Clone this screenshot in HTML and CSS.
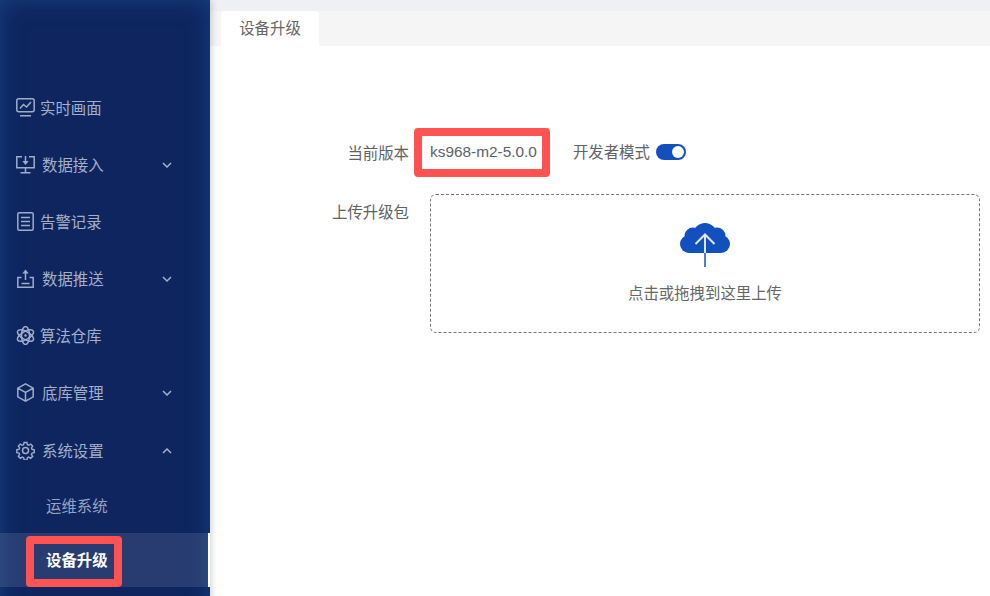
FILE: index.html
```html
<!DOCTYPE html>
<html lang="zh-CN">
<head>
<meta charset="utf-8">
<title>设备升级</title>
<link rel="stylesheet" href="styles.css">
</head>
<body>
<div class="app">
  <aside class="sidebar">
    <nav class="menu">
      <a class="item">
        <svg class="icon" viewBox="0 0 19 19"><rect x=".8" y=".8" width="17.400" height="13" rx="2"/><path d="M4 10.500l3.500-4 3 2.500L15 4M4 17.800h11"/></svg>
        <span class="label">实时画面</span>
      </a>
      <a class="item">
        <svg class="icon" viewBox="0 0 19 19"><path d="M6 1.800H.8v10.900h17.400V1.800H13M9.500 12.700v5M4.500 17.700h10M9.500 1v5"/><path class="solid" d="M6.300 6h6.400L9.500 10z"/></svg>
        <span class="label shifted">数据接入</span>
        <svg class="caret" viewBox="0 0 10 6"><path d="M1 1l4 4 4-4"/></svg>
      </a>
      <a class="item">
        <svg class="icon" viewBox="0 0 19 19"><rect x="1.800" y=".8" width="15.400" height="17.400" rx="1.500"/><path d="M5 5.500h9M5 9.500h9M5 13.500h9"/></svg>
        <span class="label">告警记录</span>
      </a>
      <a class="item">
        <svg class="icon" viewBox="0 0 19 19"><path d="M5.500 8.500H1.800v9.700h15.400V8.500h-3.700M9.500 11V4M5.500 14.500h8"/><path class="solid" d="M6.300 4.500 9.500.5l3.200 4z"/></svg>
        <span class="label shifted">数据推送</span>
        <svg class="caret" viewBox="0 0 10 6"><path d="M1 1l4 4 4-4"/></svg>
      </a>
      <a class="item">
        <svg class="icon" viewBox="0 0 19 19"><ellipse cx="9.500" cy="9.500" rx="9" ry="4" transform="rotate(30 9.500 9.500)"/><ellipse cx="9.500" cy="9.500" rx="9" ry="4" transform="rotate(90 9.500 9.500)"/><ellipse cx="9.500" cy="9.500" rx="9" ry="4" transform="rotate(150 9.500 9.500)"/><circle class="solid" cx="9.500" cy="9.500" r="1.200"/></svg>
        <span class="label">算法仓库</span>
      </a>
      <a class="item">
        <svg class="icon" viewBox="0 0 19 19"><path d="M9.500 .9l7.700 4.300v8.600l-7.700 4.300-7.700-4.300V5.200zM1.800 5.200l7.700 4.300 7.700-4.300M9.500 9.500v8.600"/></svg>
        <span class="label shifted">底库管理</span>
        <svg class="caret" viewBox="0 0 10 6"><path d="M1 1l4 4 4-4"/></svg>
      </a>
      <a class="item item-last">
        <svg class="icon" viewBox="0 0 19 19"><circle cx="9.500" cy="9.500" r="3"/><path d="M8 .9h3l.5 2.400 1.500.6 2-1.300 2.100 2.100-1.300 2 .6 1.500 2.400.5v3l-2.400.5-.6 1.500 1.300 2-2.100 2.100-2-1.300-1.500.6-.5 2.400H8l-.5-2.400-1.500-.6-2 1.300-2.100-2.100 1.300-2-.6-1.500-2.400-.5v-3l2.400-.5.6-1.500-1.300-2L3.900 2.600l2 1.300 1.500-.6z" transform="translate(.6 .6) scale(.94)"/></svg>
        <span class="label shifted">系统设置</span>
        <svg class="caret" viewBox="0 0 10 6"><path d="M1 5l4-4 4 4"/></svg>
      </a>
      <a class="subitem">运维系统</a>
      <a class="subitem active">设备升级<span class="mark mark-menu"></span></a>
    </nav>
  </aside>
  <div class="page">
    <div class="topbar"></div>
    <div class="tabs"><div class="tab">设备升级</div></div>
    <main class="content">
      <div class="row version-row">
        <div class="field-label">当前版本</div>
        <div class="version">ks968-m2-5.0.0<span class="mark mark-version"></span></div>
        <div class="dev">开发者模式</div>
        <div class="switch"><span class="knob"></span></div>
      </div>
      <div class="row upload-row">
        <div class="field-label">上传升级包</div>
        <div class="dropzone">
          <svg class="cloud" viewBox="0 0 50 46">
            <g class="cloud-body">
              <circle cx="25" cy="12" r="12"/>
              <circle cx="13" cy="13" r="8.500"/>
              <circle cx="37" cy="13" r="8.500"/>
              <circle cx="9" cy="21" r="9"/>
              <circle cx="41" cy="21" r="9"/>
              <rect x="9" y="14" width="32" height="16"/>
            </g>
            <path class="arrow" d="M25 30V12M15.500 21 25 11.500l9.500 9.500"/>
            <path class="tail" d="M25 30v14"/>
          </svg>
          <div class="hint">点击或拖拽到这里上传</div>
        </div>
      </div>
    </main>
  </div>
</div>
</body>
</html>
```
FILE: styles.css
```css
* { box-sizing: border-box; }
html, body { margin: 0; height: 100%; overflow: hidden; }
body {
  font-family: "Liberation Sans", "Noto Sans CJK SC", sans-serif;
  font-size: 15.4px;
  color: #606266;
  background: #fff;
}
.app { display: flex; width: 990px; height: 596px; overflow: hidden; }

.sidebar {
  flex: 0 0 210px;
  height: 680px;
  padding-top: 78px;
  background: #0e2560;
  box-shadow: inset 0 0 22px #17407f, 2px 0 6px rgba(0, 0, 0, .16);
  position: relative;
  z-index: 1;
}
.item {
  display: flex;
  align-items: center;
  height: 57px;
  padding-left: 16px;
  color: #a5b0c8;
}
.item-last { height: 58px; padding-top: 1px; }
.icon {
  flex: none;
  width: 19px;
  height: 19px;
  margin-top: 2px;
  fill: none;
  stroke: #a0adc8;
  stroke-width: 1.500;
}
.solid { fill: #a0adc8; stroke: none; }
.label { margin-left: 5px; }
.label.shifted { margin-left: 7px; }
.caret {
  flex: none;
  width: 10px;
  height: 6px;
  margin-top: 2px;
  margin-left: auto;
  margin-right: 38px;
  fill: none;
  stroke: #a5b0c8;
  stroke-width: 1.500;
}
.subitem {
  display: flex;
  align-items: center;
  position: relative;
  height: 55px;
  padding-left: 46px;
  padding-bottom: 1px;
  color: #98a4bf;
}
.subitem.active {
  height: 54px;
  padding-bottom: 2px;
  color: #fff;
  font-weight: 700;
  background: rgba(255, 255, 255, .11);
  border-right: 2px solid #fff;
}
.mark {
  position: absolute;
  border: 8px solid #ff5353;
  border-radius: 4px;
}
.mark-menu { left: 26px; top: 3px; width: 96px; height: 51px; }
.mark-version { left: -16px; top: -15px; width: 136px; height: 49px; }

.page { flex: 1; display: flex; flex-direction: column; min-width: 0; }
.topbar { height: 11px; background: #eef0f4; }
.tabs {
  display: flex;
  height: 35px;
  padding-left: 11px;
  background: #f5f5f5;
}
.tab {
  width: 98px;
  border-radius: 4px 4px 0 0;
  background: #fff;
  text-align: center;
  line-height: 35px;
  color: #666;
}
.content { flex: 1; padding: 82px 10px 0 0; background: #fff; }
.row { display: flex; }
.version-row { align-items: center; height: 48px; }
.field-label { width: 199px; text-align: right; line-height: 48px; color: #606266; }
.version-row .field-label { padding-top: 4px; }
.version { position: relative; margin-left: 21px; color: #606266; }
.dev { margin-left: 36px; padding-bottom: 2px; }
.switch {
  position: relative;
  width: 30px;
  height: 16px;
  margin-left: 6px;
  border-radius: 8px;
  background: #1150bd;
}
.knob {
  position: absolute;
  top: 2px;
  right: 2px;
  width: 12px;
  height: 12px;
  border-radius: 50%;
  background: #fff;
}
.upload-row { margin-top: 18px; }
.upload-row .field-label { line-height: 38px; }
.dropzone {
  flex: 1;
  height: 139px;
  margin-left: 21px;
  border: 1px dashed #777;
  border-radius: 6px;
  display: flex;
  flex-direction: column;
  align-items: center;
  padding-top: 28px;
}
.cloud { width: 50px; height: 46px; }
.cloud-body { fill: #1150bd; }
.arrow { fill: none; stroke: #dfe6f5; stroke-width: 2; }
.tail { fill: none; stroke: #4a7fdc; stroke-width: 2; }
.hint { margin-top: 13px; line-height: 24px; color: #666; }
```
